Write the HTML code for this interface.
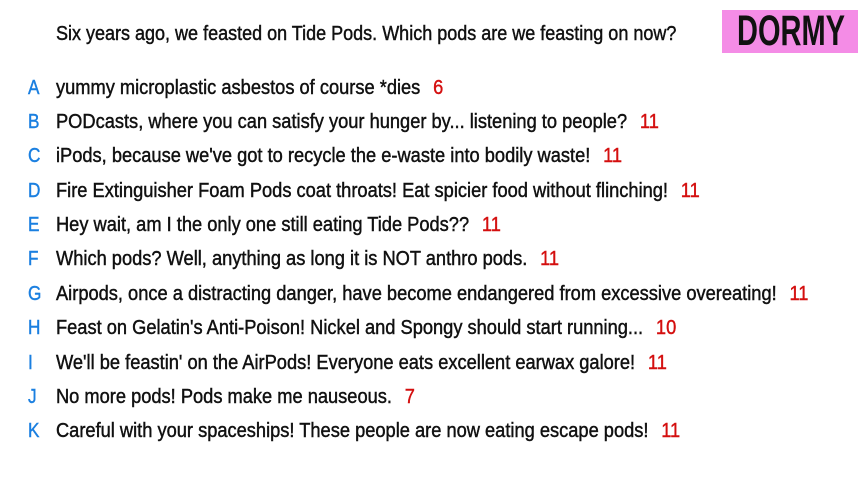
<!DOCTYPE html>
<html><head><meta charset="utf-8"><style>
html,body{margin:0;padding:0;background:#fff;width:864px;height:482px;overflow:hidden;position:relative;font-family:"Liberation Sans",sans-serif;}
.t{position:absolute;left:56px;white-space:nowrap;font-size:20px;color:#111;-webkit-text-stroke:0.45px #111;transform:scaleX(0.913);transform-origin:left center;line-height:24px;}
.l{position:absolute;left:28px;font-size:20px;color:#1a7fe0;-webkit-text-stroke:0.4px #1a7fe0;line-height:24px;transform:scaleX(0.86);transform-origin:left center;}
.n{color:#d40f0f;-webkit-text-stroke:0.4px #d40f0f;margin-left:14px;}
.dormy{position:absolute;left:722px;top:10px;width:136px;height:43px;background:#f48ce6;}
.dormy span{position:absolute;left:15px;top:0px;font-size:43px;font-weight:bold;line-height:43px;color:#111;transform:scaleX(0.675);transform-origin:left center;}
</style></head><body>
<div class="t" style="top:22px;transform:scaleX(0.9)">Six years ago, we feasted on Tide Pods. Which pods are we feasting on now?</div>
<div class="dormy"><span>DORMY</span></div>
<div class="l" style="top:76px">A</div><div class="t" style="top:76px">yummy microplastic asbestos of course *dies<span class="n">6</span></div>
<div class="l" style="top:110px">B</div><div class="t" style="top:110px">PODcasts, where you can satisfy your hunger by... listening to people?<span class="n">11</span></div>
<div class="l" style="top:144px">C</div><div class="t" style="top:144px">iPods, because we've got to recycle the e-waste into bodily waste!<span class="n">11</span></div>
<div class="l" style="top:179px">D</div><div class="t" style="top:179px">Fire Extinguisher Foam Pods coat throats! Eat spicier food without flinching!<span class="n">11</span></div>
<div class="l" style="top:213px">E</div><div class="t" style="top:213px">Hey wait, am I the only one still eating Tide Pods??<span class="n">11</span></div>
<div class="l" style="top:247px">F</div><div class="t" style="top:247px">Which pods? Well, anything as long it is NOT anthro pods.<span class="n">11</span></div>
<div class="l" style="top:282px">G</div><div class="t" style="top:282px">Airpods, once a distracting danger, have become endangered from excessive overeating!<span class="n">11</span></div>
<div class="l" style="top:316px">H</div><div class="t" style="top:316px">Feast on Gelatin's Anti-Poison! Nickel and Spongy should start running...<span class="n">10</span></div>
<div class="l" style="top:351px">I</div><div class="t" style="top:351px">We'll be feastin' on the AirPods! Everyone eats excellent earwax galore!<span class="n">11</span></div>
<div class="l" style="top:385px">J</div><div class="t" style="top:385px">No more pods! Pods make me nauseous.<span class="n">7</span></div>
<div class="l" style="top:419px">K</div><div class="t" style="top:419px">Careful with your spaceships! These people are now eating escape pods!<span class="n">11</span></div>
</body></html>
